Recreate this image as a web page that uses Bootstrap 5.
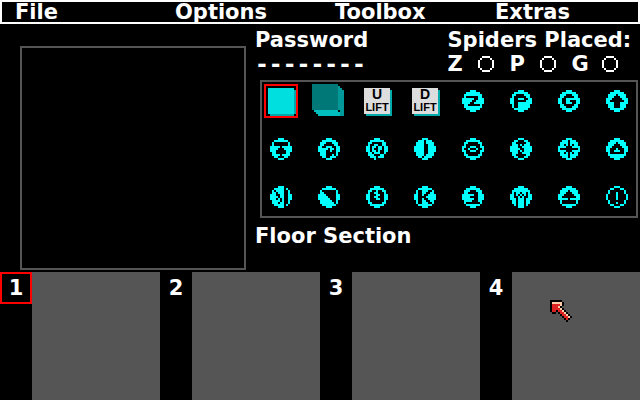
<!DOCTYPE html>
<html lang="en">
<head>
<meta charset="utf-8">
<meta name="viewport" content="width=device-width, initial-scale=1">
<title>Level Editor</title>
<link href="https://cdn.jsdelivr.net/npm/bootstrap@5.3.0/dist/css/bootstrap.min.css" rel="stylesheet">
<style>
body { background: #000; color: #fff; font: bold 21px/24px "DejaVu Sans", sans-serif; }
button { background: none; border: 0; color: inherit; font: inherit; padding: 0; }
svg { display: block; shape-rendering: crispEdges; }
.menu-bar { box-shadow: inset 0 0 0 2px #fff; }
.menu-bar a { display: block; color: #fff; text-decoration: none; line-height: 24px; padding-left: 15px; }
.preview-side { flex-grow: 2; }
.preview-frame { border: 2px solid #555; margin: 22px 10px 2px 20px; }
.side { flex-grow: 3; padding: 4px 0 24px; }
.code { font-family: "DejaVu Sans Mono", monospace; font-size: 23px; }
.side-text { margin-left: -1px; }
.counter { width: 62px; }
.counter-name { width: 30px; }
.palette { border: 2px solid #555; margin: 4px 2px 6px 4px; padding: 2px; display: grid; grid-template-columns: repeat(8, 1fr); gap: 14px; }
.tool { height: 34px; }
.picked { box-shadow: inset 0 0 0 2px #f00; }
.lift { width: 26px; height: 26px; background: #ddd; color: #000; box-shadow: 2px 2px 0 #0aa; font: bold 11px/12px "Liberation Sans", sans-serif; }
.lift b { display: block; font-size: 14px; line-height: 13px; }
.floor-number { width: 32px; height: 32px; line-height: 30px; }
.floor-view { background: #555; min-height: 128px; }
.pointer { left: 38px; top: 28px; }
</style>
</head>
<body class="d-flex flex-column min-vh-100">
<nav class="menu-bar row g-0" aria-label="Main">
  <a class="col-3" href="#">File</a>
  <a class="col-3" href="#">Options</a>
  <a class="col-3" href="#">Toolbox</a>
  <a class="col-3" href="#">Extras</a>
</nav>
<main class="row g-0">
  <div class="preview-side col d-flex"><div class="preview-frame flex-fill"></div></div>
  <div class="side col">
    <div class="row g-0 side-text">
      <div class="col-6">
        <div>Password</div>
        <div class="code">--------</div>
      </div>
      <div class="col-6">
        <div class="text-nowrap">Spiders Placed:</div>
        <div class="d-flex">
          <div class="counter d-flex align-items-center"><span class="counter-name">Z</span><svg data-art="ring" data-size="16"></svg></div>
          <div class="counter d-flex align-items-center"><span class="counter-name">P</span><svg data-art="ring" data-size="16"></svg></div>
          <div class="counter d-flex align-items-center"><span class="counter-name">G</span><svg data-art="ring" data-size="16"></svg></div>
        </div>
      </div>
    </div>
    <div class="palette" id="palette">
      <button class="tool picked d-flex align-items-center justify-content-center" aria-label="Floor"><svg width="34" height="34" viewBox="0 0 34 34"><path fill="#0aa" d="M6 6h26v24h-2v2H6z"/><path fill="#00dfdf" d="M4 4h26v26H4z"/><path fill="#f00" d="M0 0h34v34H0zM2 2v30h30V2z" fill-rule="evenodd"/></svg></button>
      <button class="tool d-flex align-items-center justify-content-center" aria-label="Block"><svg width="34" height="34" viewBox="0 0 34 34"><path fill="#009a9a" d="M26 0h0v2h2v2h2v2h2v26h-4V26h-2z"/><path fill="#00bebe" d="M0 26h26v2h2v4H6v-2H4v-2H2v-2z"/><path fill="#007878" d="M0 0h26v26H0z"/></svg></button>
      <button class="tool d-flex align-items-center justify-content-center"><span class="lift"><b>U</b>LIFT</span></button>
      <button class="tool d-flex align-items-center justify-content-center"><span class="lift"><b>D</b>LIFT</span></button>
    </div>
    <div class="side-text">Floor Section</div>
  </div>
</main>
<section class="row g-0 flex-fill" aria-label="Floors">
  <div class="col-3 d-flex"><button class="floor-number picked">1</button><div class="floor-view flex-fill"></div></div>
  <div class="col-3 d-flex"><button class="floor-number">2</button><div class="floor-view flex-fill"></div></div>
  <div class="col-3 d-flex"><button class="floor-number">3</button><div class="floor-view flex-fill"></div></div>
  <div class="col-3 d-flex"><button class="floor-number">4</button><div class="floor-view flex-fill position-relative"><svg class="pointer position-absolute" data-art="pointer" data-size="22"></svg></div></div>
</section>
<script src="https://cdn.jsdelivr.net/npm/bootstrap@5.3.0/dist/js/bootstrap.bundle.min.js"></script>
<script>
// Pixel art, one string per row: # cyan, w white, k black, r red, p peach.
const colours = { '#': '#0ff', w: '#fff', k: '#000', r: '#d22', p: '#fca' };
const art = {
  ring: ['..wwww..', '.w....w.', 'w......w', 'w......w', 'w......w', 'w......w', '.w....w.', '..wwww..'],
  pointer: ['kkkkkk.....', 'kpppppk....', 'krrrrpk....', 'krrrpk.....', 'krrrrpk....', 'krrkrrpk...', '.kk.krrpk..', '.....krrpk.', '......krrpk', '.......krk.', '........k..']
};
const top2 = ['....###....', '..#######..'], end2 = ['..#######..', '....###....'];
const tools = [
  ['Z', [...top2, '.#########.', '.#......##.', '######..###', '#####..####', '####..#####', '.##......#.', '.#########.', ...end2]],
  ['P', [...top2, '.##....###.', '.#......##.', '##..###..##', '##......###', '##..#######', '.#..######.', '.#..######.', ...end2]],
  ['G', [...top2, '.###...###.', '.##.....##.', '##..#######', '##..##...##', '##..###..##', '.##.....##.', '.###...###.', ...end2]],
  ['Up', [...top2, '.####.####.', '.###...###.', '###.....###', '##.......##', '####...####', '.###...###.', '.###...###.', ...end2]],
  ['Lift off', [...top2, '.#.......#.', '.#.......#.', '#####.#####', '####...####', '###.....###', '.##.....##.', '.####.####.', '..##...##..', '....###....']],
  ['Spiral right', [...top2, '.###...###.', '.##.....##.', '##..###..##', '#####.##.##', '####..#..##', '.###.....#.', '.###...#.#.', '..##..###..', '....###....']],
  ['Spiral left', [...top2, '.##.....##.', '.#..##..##.', '##.##.##.##', '##.#..##.##', '##.##.#..##', '.##.###..#.', '.###...##..', '..###.###..', '....#......']],
  ['Crescent', ['....###....', '..###.###..', '.####.####.', '.####..###.', '#####..####', '#####..####', '#####..####', '.####..###.', '.####.####.', '..##.####..', '....###....']],
  ['Eye', [...top2, '.##.....##.', '.#.......#.', '##..###..##', '#..#...#..#', '##..###..##', '.#.......#.', '.##.....##.', ...end2]],
  ['Spider', ['....###....', '..##...##..', '.##.....##.', '.###.#.###.', '####..#####', '#####..####', '####.#.####', '.###..####.', '.##.....##.', '..##...##..', '....###....']],
  ['Cross', ['....###....', '..###.###..', '.####.####.', '.##.#.#.##.', '####...####', '#.........#', '####...####', '.##.#.#.##.', '.####.####.', '..###.###..', '....###....']],
  ['Pyramid', [...top2, '.####.####.', '.###...###.', '###.....###', '##...#...##', '##..###..##', '.#.......#.', '.#########.', ...end2]],
  ['Runner', ['....###....', '..#####.#..', '.#.####..#.', '.##.###..#.', '###..##..##', '####.##..##', '###.#.#..##', '.####.#..#.', '.###.##..#.', '..#####.#..', '....###....']],
  ['Slope', [...top2, '.#.......#.', '.##......#.', '####.....##', '#####....##', '######...##', '.######..#.', '.#######.#.', ...end2]],
  ['Timer', ['....###....', '..#######..', '.##..#..##.', '.#..##...#.', '##...##..##', '##..##...##', '##...##..##', '.#.......#.', '.##.....##.', ...end2]],
  ['K', [...top2, '.#..###..#.', '.#..##..##.', '##..#..####', '##....#####', '##..#..####', '.#..##..##.', '.#..###..#.', ...end2]],
  ['Piece', [...top2, '.###...###.', '.##.....##.', '######..###', '####....###', '######..###', '.####...##.', '.#.......#.', ...end2]],
  ['Castle', [...top2, '.#########.', '.#.##.##.#.', '##.#.#.#.##', '##..#.#..##', '###.###.###', '.##.###.##.', '.##.###.##.', '..#.###.#..', '....###....']],
  ['Tree', [...top2, '.####.####.', '.###...###.', '###.....###', '##.......##', '#####.#####', '.#.......#.', '.#.......#.', ...end2]],
  ['Alert', ['....###....', '..##...##..', '.#.......#.', '.#...#...#.', '#....#....#', '#....#....#', '#....#....#', '.#.......#.', '.#...#...#.', '..##...##..', '....###....']]
];
function paint(svg, rows, size) {
  svg.setAttribute('viewBox', `0 0 ${rows[0].length} ${rows.length}`);
  svg.setAttribute('width', size);
  svg.setAttribute('height', size);
  svg.innerHTML = Object.entries(colours).map(([key, fill]) => {
    let d = '';
    rows.forEach((row, y) => [...row].forEach((c, x) => { if (c === key) d += `M${x} ${y}h1v1h-1z`; }));
    return d ? `<path fill="${fill}" d="${d}"/>` : '';
  }).join('');
}
for (const [name, rows] of tools) {
  const button = document.createElement('button');
  button.className = 'tool d-flex align-items-center justify-content-center';
  button.setAttribute('aria-label', name);
  button.innerHTML = '<svg></svg>';
  paint(button.firstChild, rows, 22);
  document.getElementById('palette').append(button);
}
document.querySelectorAll('svg[data-art]').forEach(s => paint(s, art[s.dataset.art], s.dataset.size));
</script>
</body>
</html>
